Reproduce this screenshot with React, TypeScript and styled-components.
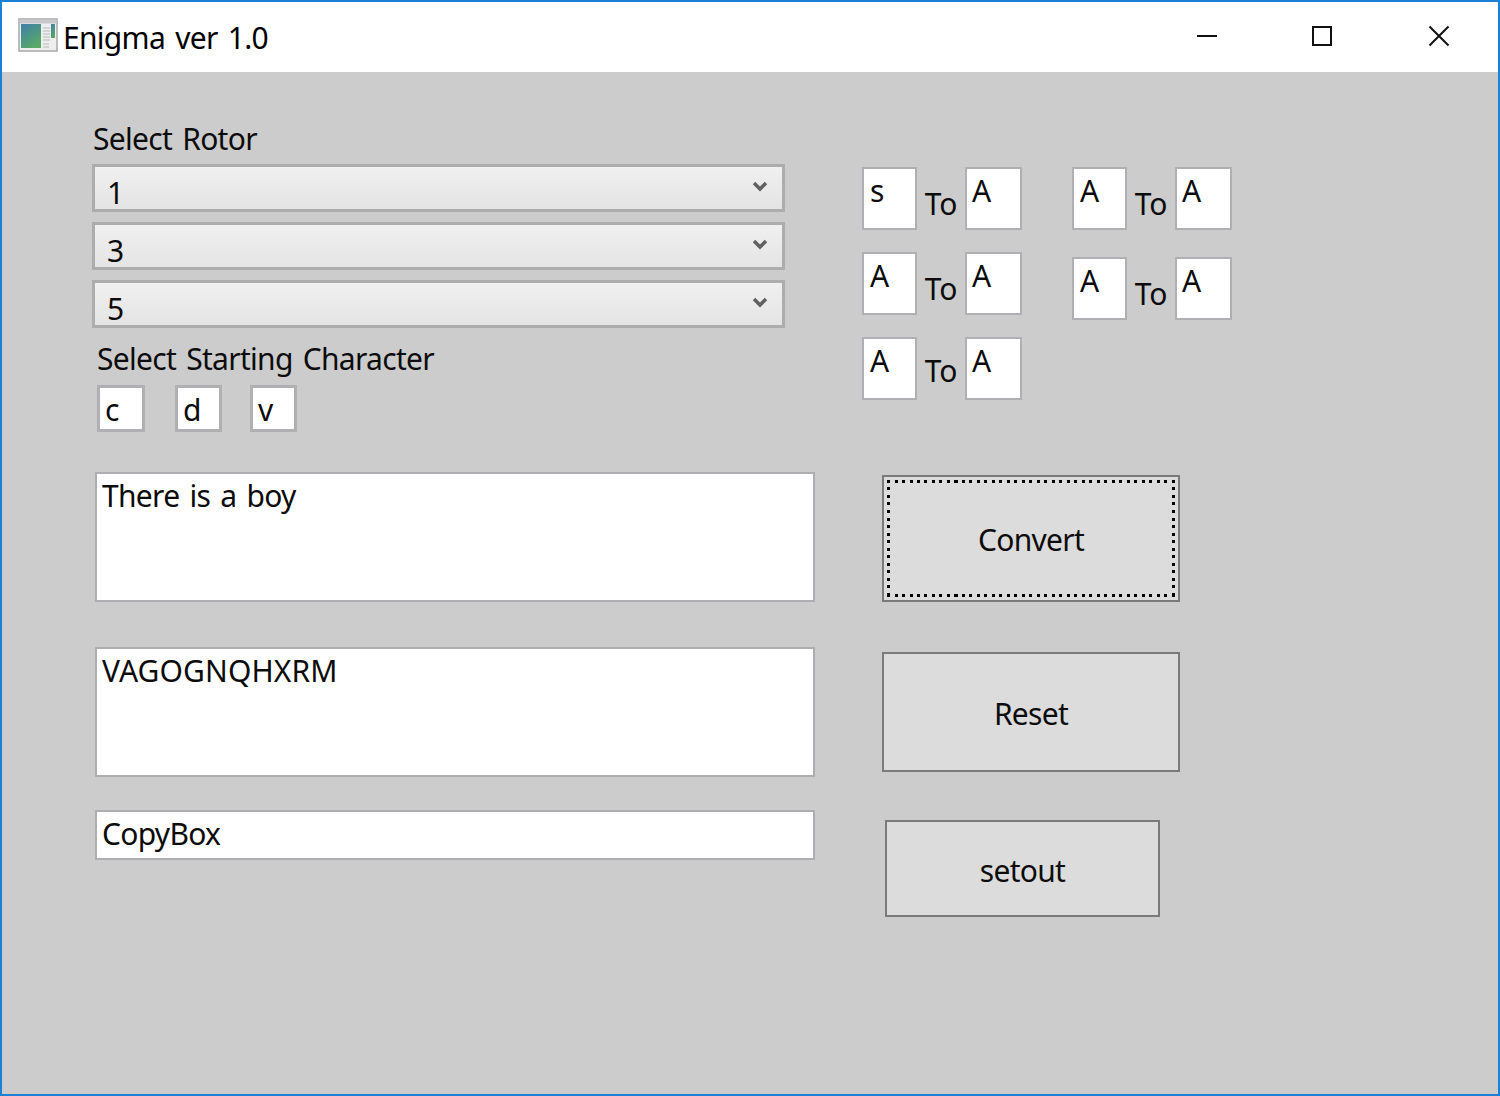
import React from "react";
import styled, { createGlobalStyle } from "styled-components";

const GlobalStyle = createGlobalStyle`
  html, body {
    margin: 0;
    padding: 0;
    background: #cccccc;
  }
  * {
    box-sizing: border-box;
  }
`;

const Window = styled.div`
  width: 1500px;
  height: 1096px;
  display: flex;
  flex-direction: column;
  border: 2px solid #1a81d6;
  background: #cccccc;
  color: #0c0c0c;
  font-family: "Noto Sans", "Open Sans", sans-serif;
  font-size: 30px;
  line-height: 40px;
  word-spacing: 3px;
  letter-spacing: -0.7px;
  overflow: hidden;
`;

const TitleBar = styled.header`
  height: 70px;
  flex: none;
  display: flex;
  align-items: center;
  background: #fff;
  padding-left: 16px;
`;

const AppIcon = styled.svg`
  width: 40px;
  height: 34px;
  flex: none;
  margin-top: -4px;
`;

const Title = styled.h1`
  margin: 2px 0 0 5px;
  font-size: 30px;
  font-weight: 400;
  line-height: 40px;
  color: #000;
`;

const Controls = styled.div`
  display: flex;
  margin-left: auto;
  height: 100%;
  padding-right: 2px;

  & > :nth-child(2) {
    margin-left: 1px;
  }
  & > :nth-child(3) {
    margin-left: 3px;
  }
`;

const ControlButton = styled.button`
  width: 114px;
  height: 100%;
  padding: 0 0 2px;
  border: none;
  background: none;
  display: flex;
  align-items: center;
  justify-content: center;
`;

const Body = styled.main`
  flex: 1;
  display: flex;
  flex-direction: column;
  padding: 46px 0 0 93px;
`;

const TopSection = styled.section`
  display: flex;
  align-items: flex-start;
`;

const RotorColumn = styled.div`
  width: 693px;
  display: flex;
  flex-direction: column;
`;

const SectionLabel = styled.div<{ $indent?: number; $height: number }>`
  margin-left: ${(p) => p.$indent ?? 0}px;
  height: ${(p) => p.$height}px;
  line-height: 42px;
`;

const SelectList = styled.div`
  display: flex;
  flex-direction: column;
  gap: 10px;
  margin: 0 3px 10px -3px;
`;

const SelectBox = styled.div`
  height: 48px;
  display: flex;
  align-items: center;
  justify-content: space-between;
  padding: 10px 14px 0 12px;
  border: 3px solid #adadad;
  background: linear-gradient(#f0f0f0, #e4e4e4);
`;

const Chevron = styled.svg`
  width: 16px;
  height: 12px;
  margin-top: -12px;
`;

const StartRow = styled.div`
  display: flex;
  gap: 28px;
  margin-left: 2px;
`;

const StartBox = styled.div`
  width: 47px;
  height: 47px;
  padding: 2px 0 0 5px;
  border: 3px solid #b0b0b4;
  background: #fff;

  &:first-child {
    width: 48px;
    margin-right: 2px;
  }
`;

const PlugPanel = styled.div`
  display: flex;
  gap: 50px;
  margin-left: 74px;
  margin-top: 49px;
`;

const PlugColumn = styled.div<{ $gap: number }>`
  display: flex;
  flex-direction: column;
  gap: ${(p) => p.$gap}px;
`;

const PlugPair = styled.div<{ $lift?: number }>`
  display: flex;
  align-items: flex-start;
  width: 160px;
  --lift: ${(p) => p.$lift ?? 0}px;
`;

const PlugBox = styled.div<{ $wide?: boolean }>`
  width: ${(p) => (p.$wide ? 57 : 55)}px;
  height: 63px;
  flex: none;
  padding: 2px 0 0 ${(p) => (p.$wide ? 5 : 6)}px;
  border: 2px solid #b0b0b4;
  background: #fff;
`;

const ToLabel = styled.span`
  width: 48px;
  flex: none;
  text-align: center;
  letter-spacing: 0;
  padding-top: calc(17px - var(--lift));
`;

const BottomSection = styled.section`
  display: flex;
  flex-direction: column;
  margin-top: 40px;
`;

const FormRow = styled.div<{ $height: number; $gap: number }>`
  display: flex;
  align-items: flex-start;
  height: ${(p) => p.$height}px;
  margin-bottom: ${(p) => p.$gap}px;
`;

const TextBox = styled.div<{ $height: number; $caps?: boolean }>`
  width: 720px;
  height: ${(p) => p.$height}px;
  flex: none;
  padding: 2px 0 0 5px;
  border: 2px solid #aeaeb2;
  background: #fff;
  ${(p) => p.$caps && "letter-spacing: 0.1px;"}
`;

const ActionButton = styled.button<{ $w: number; $h: number; $left: number; $top: number; $focused?: boolean }>`
  width: ${(p) => p.$w}px;
  height: ${(p) => p.$h}px;
  margin-left: ${(p) => p.$left}px;
  margin-top: ${(p) => p.$top}px;
  padding: ${(p) => (p.$focused ? 2 : 4)}px 0 0;
  flex: none;
  position: relative;
  border: 2px solid #7a7a7a;
  background: #dcdcdc;
  color: #0c0c0c;
  font: inherit;
  word-spacing: inherit;
  letter-spacing: inherit;

  ${(p) =>
    p.$focused &&
    `&::before {
      content: "";
      position: absolute;
      inset: 3px;
      background:
        repeating-linear-gradient(90deg, #000 0 3px, transparent 3px 7.5px) top / 100% 3px no-repeat,
        repeating-linear-gradient(90deg, #000 0 3px, transparent 3px 7.5px) bottom / 100% 3px no-repeat,
        repeating-linear-gradient(180deg, #000 0 3px, transparent 3px 7.5px) left / 3px 100% no-repeat,
        repeating-linear-gradient(180deg, #000 0 3px, transparent 3px 7.5px) right / 3px 100% no-repeat;
    }`}
`;

const rotors = ["1", "3", "5"];
const startChars = ["c", "d", "v"];

const WindowsIcon = () => (
  <AppIcon viewBox="0 0 40 34">
    <defs>
      <linearGradient id="pane" x1="0" y1="0" x2="0.6" y2="1">
        <stop offset="0" stopColor="#3f7fa8" />
        <stop offset="1" stopColor="#58a868" />
      </linearGradient>
    </defs>
    <rect x="1" y="1" width="38" height="32" fill="#eeeeee" stroke="#a8a8a8" strokeWidth="1.5" />
    <rect x="1.5" y="1.5" width="37" height="4" fill="#c8c8cc" />
    <rect x="3" y="6" width="20" height="24" fill="url(#pane)" />
    <path d="M25 10h7M25 13h7M25 16h7M25 19h7M25 22h7M25 26h6M25 29h6" stroke="#b8b8b8" strokeWidth="1" />
    <rect x="33" y="6" width="4" height="14" fill="url(#pane)" />
  </AppIcon>
);

const ChevronIcon = () => (
  <Chevron viewBox="0 0 16 12">
    <path d="M2 2 L8 8 L14 2" fill="none" stroke="#606060" strokeWidth="3.4" />
  </Chevron>
);

export default function App() {
  return (
    <>
      <GlobalStyle />
      <Window>
        <TitleBar>
          <WindowsIcon />
          <Title>Enigma ver 1.0</Title>
          <Controls>
            <ControlButton aria-label="minimize">
              <svg width="22" height="22" viewBox="0 0 22 22">
                <path d="M1 11h20" stroke="#111" strokeWidth="2" fill="none" />
              </svg>
            </ControlButton>
            <ControlButton aria-label="maximize">
              <svg width="22" height="22" viewBox="0 0 22 22">
                <rect x="2" y="2" width="18" height="18" stroke="#111" strokeWidth="2" fill="none" />
              </svg>
            </ControlButton>
            <ControlButton aria-label="close">
              <svg width="22" height="22" viewBox="0 0 22 22">
                <path d="M1.5 1.5l19 19M20.5 1.5l-19 19" stroke="#111" strokeWidth="2" fill="none" />
              </svg>
            </ControlButton>
          </Controls>
        </TitleBar>
        <Body>
          <TopSection>
            <RotorColumn>
              <SectionLabel $indent={-2} $height={46}>
                Select Rotor
              </SectionLabel>
              <SelectList>
                {rotors.map((r) => (
                  <SelectBox key={r}>
                    {r}
                    <ChevronIcon />
                  </SelectBox>
                ))}
              </SelectList>
              <SectionLabel $indent={2} $height={47}>
                Select Starting Character
              </SectionLabel>
              <StartRow>
                {startChars.map((c) => (
                  <StartBox key={c}>{c}</StartBox>
                ))}
              </StartRow>
            </RotorColumn>
            <PlugPanel>
              <PlugColumn $gap={22}>
                <PlugPair>
                  <PlugBox>s</PlugBox>
                  <ToLabel>To</ToLabel>
                  <PlugBox $wide>A</PlugBox>
                </PlugPair>
                <PlugPair>
                  <PlugBox>A</PlugBox>
                  <ToLabel>To</ToLabel>
                  <PlugBox $wide>A</PlugBox>
                </PlugPair>
                <PlugPair $lift={3}>
                  <PlugBox>A</PlugBox>
                  <ToLabel>To</ToLabel>
                  <PlugBox $wide>A</PlugBox>
                </PlugPair>
              </PlugColumn>
              <PlugColumn $gap={27}>
                <PlugPair>
                  <PlugBox>A</PlugBox>
                  <ToLabel>To</ToLabel>
                  <PlugBox $wide>A</PlugBox>
                </PlugPair>
                <PlugPair>
                  <PlugBox>A</PlugBox>
                  <ToLabel>To</ToLabel>
                  <PlugBox $wide>A</PlugBox>
                </PlugPair>
              </PlugColumn>
            </PlugPanel>
          </TopSection>
          <BottomSection>
            <FormRow $height={130} $gap={45}>
              <TextBox $height={130}>There is a boy</TextBox>
              <ActionButton $w={298} $h={127} $left={67} $top={3} $focused>
                Convert
              </ActionButton>
            </FormRow>
            <FormRow $height={130} $gap={33}>
              <TextBox $height={130} $caps>
                VAGOGNQHXRM
              </TextBox>
              <ActionButton $w={298} $h={120} $left={67} $top={5}>
                Reset
              </ActionButton>
            </FormRow>
            <FormRow $height={97} $gap={0}>
              <TextBox $height={50}>CopyBox</TextBox>
              <ActionButton $w={275} $h={97} $left={70} $top={10}>
                setout
              </ActionButton>
            </FormRow>
          </BottomSection>
        </Body>
      </Window>
    </>
  );
}
